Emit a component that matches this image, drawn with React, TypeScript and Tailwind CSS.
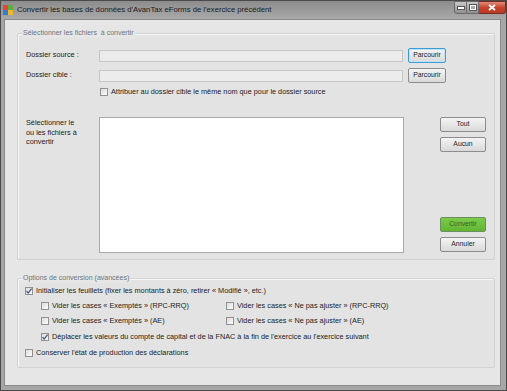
import React from "react";

const font = { fontFamily: '"Liberation Sans", Arial, sans-serif' };

function Check({ checked = false }: { checked?: boolean }) {
  return (
    <span className="relative inline-block w-[8px] h-[8px] shrink-0 border border-[#8f9193] bg-gradient-to-br from-[#dcdcdc] to-[#fbfbfb]">
      {checked && (
        <svg viewBox="0 0 8 8" className="absolute left-[-1px] top-[-1px] w-[8px] h-[8px]">
          <path d="M1.5 4.2 L3.2 6 L6.6 1.6" fill="none" stroke="#4b5d7d" strokeWidth="1.3" />
        </svg>
      )}
    </span>
  );
}

function Btn({ label, focused = false, green = false }: { label: string; focused?: boolean; green?: boolean }) {
  if (green) {
    return (
      <div className="w-[46px] h-[15px] flex items-center justify-center rounded-[2px] border border-[#6d8f5e] bg-gradient-to-b from-[#7ccb4a] to-[#62b534] text-[6.8px] text-[#3b5f25]">
        {label}
      </div>
    );
  }
  return (
    <div
      className={
        "h-[15px] flex items-center justify-center rounded-[2px] border bg-gradient-to-b from-[#f4f4f4] to-[#d9d9d9] text-[6.8px] text-[#222] " +
        (focused ? "border-[#3d9bd5] shadow-[inset_0_0_0_1px_#bfe3f7]" : "border-[#8c8c8c]")
      }
      style={{ width: "100%" }}
    >
      {label}
    </div>
  );
}

export default function App() {
  return (
    <div style={font} className="w-[507px] h-[391px] flex flex-col bg-[#a6a6a6] border border-[#4a4a4a] overflow-hidden">
      {/* Title bar */}
      <div className="h-[18px] flex items-start bg-gradient-to-b from-[#8c8c8c] to-[#a9a9a9]">
        <div className="flex items-center h-[17px] pl-[2px] flex-1">
          <svg viewBox="0 0 10 10" className="w-[10px] h-[10px] mr-[4px]">
            <rect x="0" y="0" width="5" height="5" fill="#e2463a" />
            <rect x="5" y="0" width="5" height="5" fill="#5fae3a" />
            <rect x="0" y="5" width="5" height="5" fill="#2f7fd1" />
            <rect x="5" y="5" width="5" height="5" fill="#f2b82c" />
          </svg>
          <span className="text-[7.7px] text-[#1a1a1a] whitespace-nowrap">
            Convertir les bases de données d'AvanTax eForms de l'exercice précédent
          </span>
        </div>
        <div className="flex h-[13px]">
          <div className="w-[13px] h-[13px] border border-[#6a6a6a] rounded-bl-[3px] bg-gradient-to-b from-[#c9c9c9] to-[#8f8f8f] flex items-end justify-center pb-[3px]">
            <span className="block w-[6px] h-[2px] bg-white border border-[#555] box-content" />
          </div>
          <div className="w-[12px] h-[13px] border-y border-r border-[#6a6a6a] bg-gradient-to-b from-[#c9c9c9] to-[#8f8f8f] flex items-center justify-center">
            <span className="block w-[6px] h-[5px] border-[1.5px] border-white outline outline-1 outline-[#555]" />
          </div>
          <div className="w-[27px] h-[13px] border-y border-r border-[#7a2a20] rounded-br-[3px] bg-gradient-to-b from-[#e08a7a] via-[#c8442f] to-[#b83a25] flex items-center justify-center">
            <svg viewBox="0 0 8 7" className="w-[8px] h-[7px]">
              <path d="M1 1 L7 6 M7 1 L1 6" stroke="#fff" strokeWidth="1.8" />
            </svg>
          </div>
        </div>
      </div>

      {/* Client area */}
      <div className="flex-1 ml-[3px] mr-[5px] mb-[4px] bg-[#e6e6e6] border border-[#8a8a8a] pl-[12px] pr-[5px] pt-[13px]">
        {/* Group 1 */}
        <div className="relative w-[478px] h-[227px] border border-[#d3d3d3] rounded-[2px] shadow-[inset_1px_1px_0_#f6f6f6] bg-[#e3e3e3]">
          <span className="absolute left-[4px] top-[-6px] px-[1px] text-[7px] leading-[10px] text-[#6b7580] bg-[#e6e6e6]">
            Sélectionner les fichiers&nbsp; à convertir
          </span>
          <div className="flex flex-col pl-[8px] pt-[14px] text-[7.3px] text-[#222]">
            <div className="flex items-center h-[15px]">
              <span className="w-[73px]">Dossier source :</span>
              <div className="w-[304px] h-[12px] border border-[#c6c6c6] bg-[#ececec]" />
              <div className="w-[38px] ml-[5px]">
                <Btn label="Parcourir" focused />
              </div>
            </div>
            <div className="flex items-center h-[15px] mt-[5px]">
              <span className="w-[73px]">Dossier cible :</span>
              <div className="w-[304px] h-[12px] border border-[#c6c6c6] bg-[#ececec]" />
              <div className="w-[38px] ml-[5px]">
                <Btn label="Parcourir" />
              </div>
            </div>
            <div className="flex items-center h-[10px] mt-[4px] pl-[74px]">
              <Check />
              <span className="ml-[3px] whitespace-nowrap">
                Attribuer au dossier cible le même nom que pour le dossier source
              </span>
            </div>
            <div className="flex mt-[20px]">
              <span className="w-[73px] leading-[9.5px] pt-[1px]">
                Sélectionner le
                <br />
                ou les fichiers à
                <br />
                convertir
              </span>
              <div className="w-[305px] h-[136px] border border-[#a9a9a9] bg-white" />
              <div className="flex flex-col ml-[36px] w-[46px]">
                <Btn label="Tout" />
                <div className="mt-[5px]">
                  <Btn label="Aucun" />
                </div>
                <div className="mt-[65px]">
                  <Btn label="Convertir" green />
                </div>
                <div className="mt-[5px]">
                  <Btn label="Annuler" />
                </div>
              </div>
            </div>
          </div>
        </div>

        {/* Group 2 */}
        <div className="relative mt-[18px] w-[478px] h-[90px] border border-[#d3d3d3] rounded-[2px] shadow-[inset_1px_1px_0_#f6f6f6] bg-[#e3e3e3]">
          <span className="absolute left-[4px] top-[-6px] px-[1px] text-[7px] leading-[10px] text-[#6b7580] bg-[#e6e6e6]">
            Options de conversion (avancées)
          </span>
          <div className="flex flex-col pl-[7px] pt-[4px] text-[7.3px] text-[#222]">
            <div className="flex items-center h-[16px]">
              <Check checked />
              <span className="ml-[3px] whitespace-nowrap">
                Initialiser les feuillets (fixer les montants à zéro, retirer « Modifié », etc.)
              </span>
            </div>
            <div className="flex items-center h-[14px] pl-[16px]">
              <div className="flex items-center w-[185px]">
                <Check />
                <span className="ml-[3px] whitespace-nowrap">Vider les cases « Exemptés » (RPC-RRQ)</span>
              </div>
              <div className="flex items-center">
                <Check />
                <span className="ml-[3px] whitespace-nowrap">Vider les cases « Ne pas ajuster » (RPC-RRQ)</span>
              </div>
            </div>
            <div className="flex items-center h-[16px] pl-[16px]">
              <div className="flex items-center w-[185px]">
                <Check />
                <span className="ml-[3px] whitespace-nowrap">Vider les cases « Exemptés » (AE)</span>
              </div>
              <div className="flex items-center">
                <Check />
                <span className="ml-[3px] whitespace-nowrap">Vider les cases « Ne pas ajuster » (AE)</span>
              </div>
            </div>
            <div className="flex items-center h-[16px] pl-[16px]">
              <Check checked />
              <span className="ml-[3px] whitespace-nowrap">
                Déplacer les valeurs du compte de capital et de la FNAC à la fin de l'exercice au l'exercice suivant
              </span>
            </div>
            <div className="flex items-center h-[16px]">
              <Check />
              <span className="ml-[3px] whitespace-nowrap">Conserver l'état de production des déclarations</span>
            </div>
          </div>
        </div>
      </div>
    </div>
  );
}
